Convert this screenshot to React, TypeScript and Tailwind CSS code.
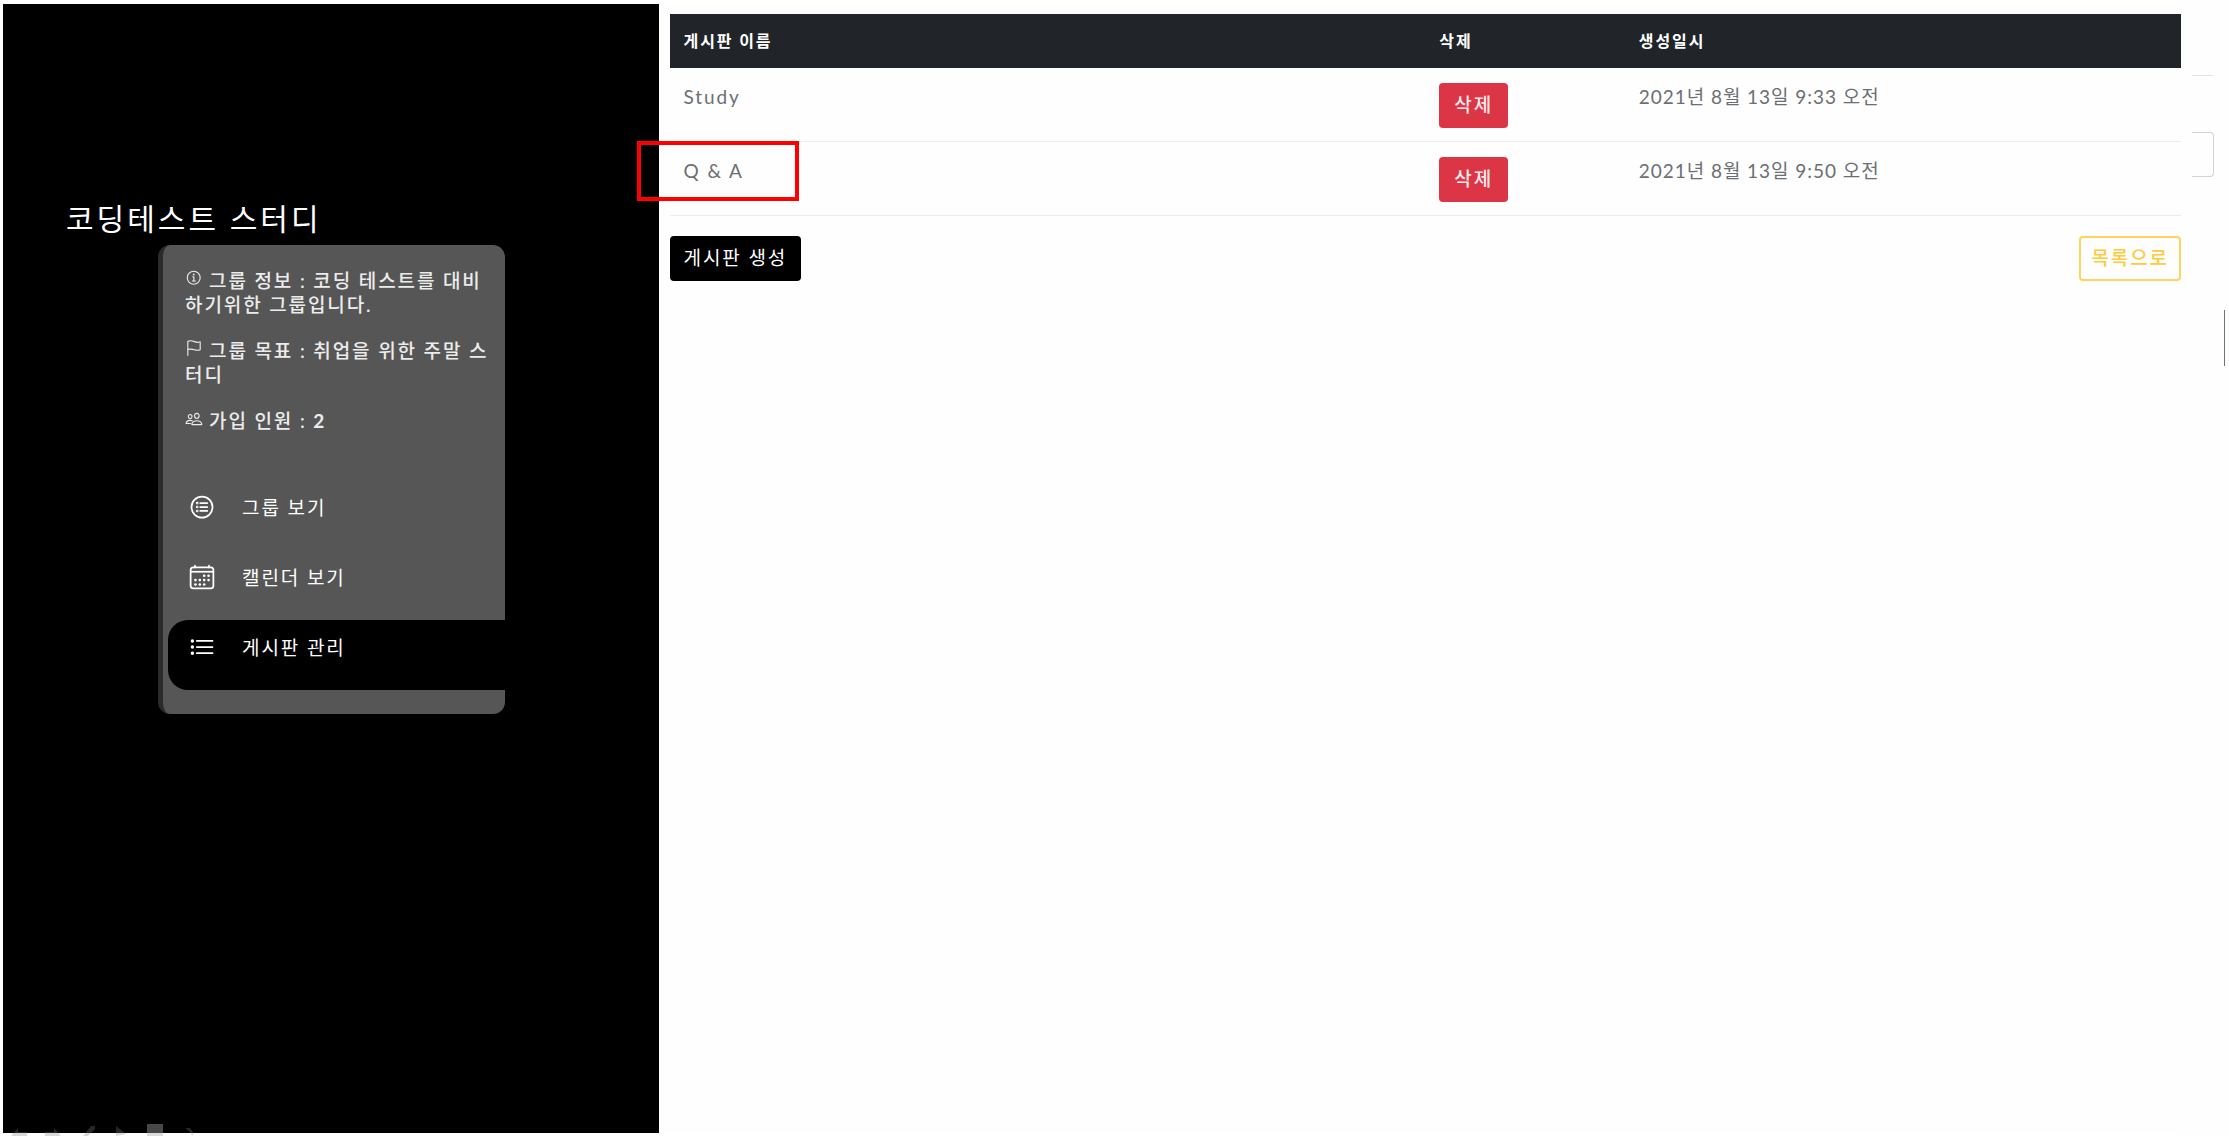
import React from "react";
import {
  IoInformationCircleOutline,
  IoFlagOutline,
  IoPeopleOutline,
  IoListCircleOutline,
  IoListOutline,
  IoCalendarOutline,
} from "react-icons/io5";

const info = [
  { icon: IoInformationCircleOutline, text: "그룹 정보 : 코딩 테스트를 대비하기위한 그룹입니다." },
  { icon: IoFlagOutline, text: "그룹 목표 : 취업을 위한 주말 스터디" },
  { icon: IoPeopleOutline, text: "가입 인원 : ", count: "2" },
];

const menu = [
  { icon: IoListCircleOutline, label: "그룹 보기", active: false },
  { icon: IoCalendarOutline, label: "캘린더 보기", active: false },
  { icon: IoListOutline, label: "게시판 관리", active: true },
];

const boards = [
  { name: "Study", date: "2021년 8월 13일 9:33 오전", marked: false },
  { name: "Q & A", date: "2021년 8월 13일 9:50 오전", marked: true },
];

function Sidebar() {
  return (
    <aside className="w-[30.1%] shrink-0 bg-black pt-48 text-white">
      <h1 className="pl-[63px] text-[30px] leading-[44px] tracking-widest">코딩테스트 스터디</h1>
      <nav className="mt-[5px] ml-[155px] w-[53%] rounded-xl border-l-[5px] border-[#2b2b2b] bg-[#565656] pb-6">
        <div className="space-y-[22px] pt-6 pr-4 pl-[22px] font-medium text-[#ececec]">
          {info.map(({ icon: Icon, text, count }) => (
            <p key={text} className="leading-6 break-all">
              <Icon className="-mt-1 mr-[6px] mb-[6px] inline size-[18px] stroke-[#ececec]" />
              {text}
              {count && <span className="font-bold">{count}</span>}
            </p>
          ))}
        </div>
        <ul className="mt-[46px] pl-[5px]">
          {menu.map(({ icon: Icon, label, active }) => (
            <li key={label}>
              <a
                href="#"
                className={
                  active
                    ? "flex h-[70px] items-start rounded-l-[20px] bg-black pt-[13px] pl-5"
                    : "flex h-[70px] items-start pt-[13px] pl-5"
                }
              >
                <Icon className="mr-[26px] size-[28px]" />
                <span className="leading-[30px]">{label}</span>
              </a>
            </li>
          ))}
        </ul>
      </nav>
    </aside>
  );
}

function Boards() {
  return (
    <main className="min-w-0 flex-1 pt-[10px] pl-[11px]">
      <table className="w-full table-fixed text-left text-[#6c6f72]">
        <thead className="bg-[#212529] text-base text-white">
          <tr className="h-[54px]">
            <th className="w-1/2 px-3.5 font-bold">게시판 이름</th>
            <th className="w-[13.2%] px-3.5 font-bold">삭제</th>
            <th className="px-3.5 font-bold">생성일시</th>
          </tr>
        </thead>
        <tbody>
          {boards.map((b) => (
            <tr key={b.name} className="border-b border-[#ececee] align-top">
              <td className="relative px-3.5 pt-[15px] leading-7">
                {b.name}
                {b.marked && (
                  <span className="absolute -top-px -left-[33px] h-[60px] w-[162px] border-4 border-[#ff0000]" />
                )}
              </td>
              <td className="px-3.5 pt-[15px] pb-[13px]">
                <button className="block h-[45px] rounded bg-[#dc3545] px-[15px] font-medium text-[#fbe9eb]">삭제</button>
              </td>
              <td className="px-3.5 pt-[15px] leading-7 tracking-wider">{b.date}</td>
            </tr>
          ))}
        </tbody>
      </table>
      <div className="mt-5 flex justify-between">
        <button className="h-[45px] rounded bg-black px-3.5 text-white">게시판 생성</button>
        <button className="h-[45px] rounded border-2 border-[#ffd45c] px-2.5 font-medium text-[#ffcb3c]">목록으로</button>
      </div>
    </main>
  );
}

function SlideControls() {
  return (
    <svg className="absolute bottom-0 left-0" width="210" height="12" viewBox="0 0 210 12" aria-hidden="true">
      <g fill="#808080" opacity="0.3">
        <path d="M11 12 18 4v4h9v4zM54 4l7 8H45V8h9zM83 12 91 2h4v3l-7 7zM116 2l10 8-10 2zM185 4h5l3 4v4l-4-5z" />
      </g>
      <path d="M147 0h16v9h-16z" fill="#484848" />
      <path d="M147 9h16v3h-16z" fill="#dcdcdc" />
    </svg>
  );
}

export default function App() {
  return (
    <div className="relative flex min-h-screen bg-[#fefefe] font-['Lato','Noto_Sans_CJK_KR',sans-serif] text-[19px] tracking-widest">
      <div className="flex min-w-0 flex-1 border-t-4 border-b-[3px] border-l-[3px] border-white">
        <Sidebar />
        <Boards />
      </div>
      <div className="w-12 shrink-0 pl-[11px]">
        <div className="mt-[75px] w-[21px] border-t border-[#dee2e6]" />
        <div className="mt-[56px] h-[45px] w-[22px] rounded-r border border-l-0 border-[#ced4da]" />
        <div className="mt-[133px] ml-8 h-14 w-px bg-[#6c757d]" />
      </div>
      <SlideControls />
    </div>
  );
}
